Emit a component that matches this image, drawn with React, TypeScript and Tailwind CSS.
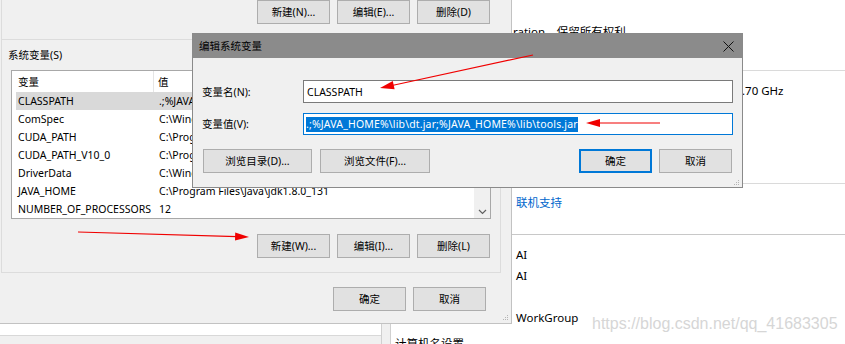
import React from 'react'
import clsx from 'clsx'

// rows 0-4 sit under the edit dialog, so only their first few letters show
const rows = [
  { name: 'CLASSPATH', value: '.;%JAVA', selected: true, hidden: true },
  { name: 'ComSpec', value: 'C:\\Wind', hidden: true },
  { name: 'CUDA_PATH', value: 'C:\\Prog', hidden: true },
  { name: 'CUDA_PATH_V10_0', value: 'C:\\Prog', hidden: true },
  { name: 'DriverData', value: 'C:\\Wind', hidden: true },
  { name: 'JAVA_HOME', value: 'C:\\Program Files\\Java\\jdk1.8.0_131' },
  { name: 'NUMBER_OF_PROCESSORS', value: '12' },
]

function Btn({ children, className, primary }: { children: React.ReactNode; className?: string; primary?: boolean }) {
  return (
    <div
      className={clsx(
        'h-[24px] shrink-0 flex items-center justify-center bg-[#e1e1e1] text-black',
        primary ? 'border-2 border-[#0078d7]' : 'border border-[#adadad]',
        className
      )}
    >
      {children}
    </div>
  )
}

function Grip() {
  return (
    <svg width="6" height="6" viewBox="0 0 6 6" className="block">
      <rect x="4" y="0" width="1" height="1" fill="#b5b5b5" />
      <rect x="2" y="2" width="1" height="1" fill="#b5b5b5" />
      <rect x="4" y="2" width="1" height="1" fill="#b5b5b5" />
      <rect x="0" y="4" width="1" height="1" fill="#b5b5b5" />
      <rect x="2" y="4" width="1" height="1" fill="#b5b5b5" />
      <rect x="4" y="4" width="1" height="1" fill="#b5b5b5" />
    </svg>
  )
}

function EnvWindow() {
  return (
    <div className="h-[324px] bg-[#f0f0f0] border-r border-b border-[#c2c2c2] flex flex-col">
      {/* user variables, mostly scrolled away */}
      <div className="h-[39px] ml-[1px] border-l border-[#dcdcdc] flex justify-end gap-[7px] pr-[21px]">
        <Btn className="w-[73px]">新建(N)...</Btn>
        <Btn className="w-[73px]">编辑(E)...</Btn>
        <Btn className="w-[73px]">删除(D)</Btn>
      </div>

      {/* system variables */}
      <div className="ml-[1px] w-[500px] h-[234px] border border-[#dcdcdc] flex flex-col">
        <div className="mt-[8px] pl-[6px]">系统变量(S)</div>
        <div className="mt-[8px] ml-[9px] w-[480px] h-[149px] border border-[#a8a8a8] bg-white flex">
          <div className="flex-1 overflow-hidden">
            <div className="h-[21px] flex items-center">
              <div className="w-[142px] h-full flex items-center pl-[6px] border-r border-[#e5e5e5]">变量</div>
              <div className="pl-[4px] w-[29px] overflow-hidden">值</div>
            </div>
            <div className="pl-[4px]">
              {rows.map((r) => (
                <div key={r.name} className={clsx('h-[18px] flex items-center whitespace-nowrap', r.selected && 'bg-[#d9d9d9]')}>
                  <div className="w-[141px] shrink-0 pl-[2px]">{r.name}</div>
                  <div className={clsx('pl-[2px]', r.hidden && 'w-[35px] overflow-hidden')}>{r.value}</div>
                </div>
              ))}
            </div>
          </div>
          <div className="w-[16px] bg-[#f0f0f0] flex flex-col justify-end items-center pb-[3px]">
            <svg width="9" height="6" viewBox="0 0 9 6">
              <path d="M1 1 L4.5 4.5 L8 1" fill="none" stroke="#606060" strokeWidth="1.2" />
            </svg>
          </div>
        </div>
        <div className="mt-[15px] flex justify-end gap-[7px] pr-[10px]">
          <Btn className="w-[73px]">新建(W)...</Btn>
          <Btn className="w-[73px]">编辑(I)...</Btn>
          <Btn className="w-[73px]">删除(L)</Btn>
        </div>
      </div>

      <div className="mt-[14px] flex justify-end gap-[7px] pr-[25px]">
        <Btn className="w-[73px]">确定</Btn>
        <Btn className="w-[73px]">取消</Btn>
      </div>
      <div className="mt-auto flex justify-end pr-[2px] pb-[2px]">
        <Grip />
      </div>
    </div>
  )
}

function BottomStrip() {
  return (
    <div className="h-[20px] flex">
      <div className="w-[381px] bg-[#f0f0f0]">
        <div className="h-[12px] bg-white border-b border-[#d8d8d8]" />
      </div>
      <div className="w-[10px] bg-[#f0f0f0] border-l border-r border-[#d0d0d0]" />
      <div className="flex-1 bg-white pl-[4px] pt-[12px] text-[11.5px] leading-[16px] overflow-hidden">计算机名设置</div>
    </div>
  )
}

function SystemPanel() {
  return (
    <div className="flex-1 bg-white flex flex-col text-[11.5px] leading-[16px]">
      <div className="h-[71px] border-b border-[#dadada] pl-[1px] overflow-hidden">
        <div className="h-[33px] pt-[24px] overflow-hidden whitespace-nowrap">ration。保留所有权利。</div>
      </div>
      <div className="h-[113px] border-b border-[#dadada] pt-[12px] pl-[230px] whitespace-nowrap">.70 GHz</div>
      <div className="h-[51px] border-b border-[#c8c8c8] pt-[11px] pl-[4px] text-[#0066cc]">联机支持</div>
      <div className="pt-[12px] pl-[4px] flex flex-col">
        <div>AI</div>
        <div className="mt-[5px]">AI</div>
        <div className="mt-[26px]">WorkGroup</div>
      </div>
    </div>
  )
}

function EditDialog() {
  return (
    <div className="absolute left-[192px] top-[33px] w-[551px] h-[155px] border border-[#8a8a8a] bg-[#f0f0f0] flex flex-col">
      <div className="h-[24px] bg-[#8b8b8b] flex items-center justify-between pl-[6px] pr-[8px]">
        <span>编辑系统变量</span>
        <svg width="11" height="11" viewBox="0 0 11 11">
          <path d="M0.5 0.5 L10.5 10.5 M10.5 0.5 L0.5 10.5" stroke="#111" strokeWidth="1" />
        </svg>
      </div>
      <div className="flex-1 flex flex-col pl-[9px] pr-[9px] pt-[22px]">
        <div className="flex items-center">
          <div className="w-[101px]">变量名(N):</div>
          <div className="flex-1 h-[23px] border border-[#7a7a7a] bg-white flex items-center pl-[3px]">CLASSPATH</div>
        </div>
        <div className="mt-[10px] flex items-center">
          <div className="w-[101px]">变量值(V):</div>
          <div className="flex-1 h-[22px] border border-[#0078d7] bg-white flex items-center pl-[2px]">
            <span className="bg-[#0078d7] text-white leading-[15px] tracking-[0.15px] whitespace-nowrap">
              .;%JAVA_HOME%\lib\dt.jar;%JAVA_HOME%\lib\tools.jar
            </span>
          </div>
        </div>
        <div className="mt-[14px] flex pl-[1px] pr-[1px]">
          <Btn className="w-[109px]">浏览目录(D)...</Btn>
          <Btn className="w-[110px] ml-[8px]">浏览文件(F)...</Btn>
          <Btn className="w-[73px] ml-auto" primary>确定</Btn>
          <Btn className="w-[73px] ml-[7px]">取消</Btn>
        </div>
        <div className="mt-auto flex justify-end -mr-[7px] pb-[1px]">
          <Grip />
        </div>
      </div>
    </div>
  )
}

function Arrows() {
  return (
    <svg className="absolute inset-0 pointer-events-none" width="845" height="344" viewBox="0 0 845 344">
      <g stroke="#f00000" strokeWidth="1.2" fill="none">
        <line x1="533" y1="55" x2="392" y2="85.5" />
        <line x1="660" y1="123" x2="598" y2="123" />
        <line x1="78" y1="232" x2="237" y2="236.7" />
      </g>
      <g fill="#f00000">
        <polygon points="380,88 394.6,89.2 392.8,81" />
        <polygon points="586,123 600,119 600,127" />
        <polygon points="249,237 235,240.6 235.2,232.6" />
      </g>
    </svg>
  )
}

export default function App() {
  return (
    <div className="relative w-[845px] h-[344px] overflow-hidden bg-white flex font-['Noto_Sans','Noto_Sans_CJK_SC',sans-serif] text-[10.5px] leading-[14px] text-black">
      <div className="w-[512px] shrink-0 flex flex-col">
        <EnvWindow />
        <BottomStrip />
      </div>
      <SystemPanel />
      <EditDialog />
      <Arrows />
      <div className="absolute left-[592px] top-[315px] font-['Liberation_Sans',sans-serif] text-[16px] leading-[18px] text-[#d6d6d6]">
        https://blog.csdn.net/qq_41683305
      </div>
    </div>
  )
}
